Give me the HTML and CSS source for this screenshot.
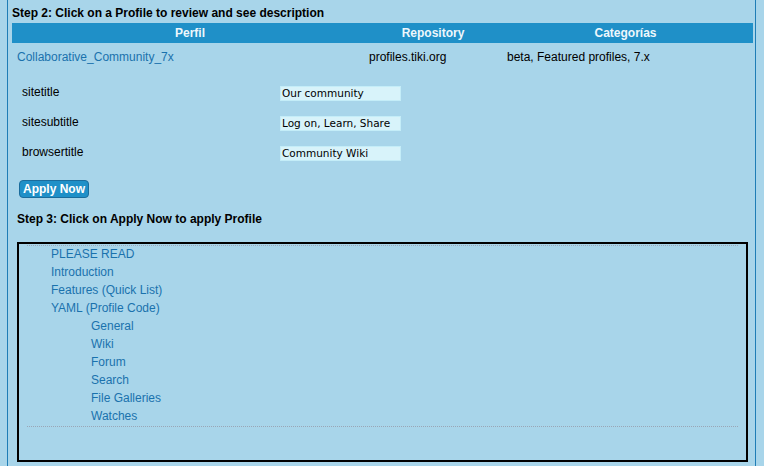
FILE: index.html
```html
<!DOCTYPE html>
<html>
<head>
<meta charset="utf-8">
<link rel="stylesheet" href="styles.css">
</head>
<body>
<div class="panel">
  <h3 class="step">Step 2: Click on a Profile to review and see description</h3>
  <div class="table">
    <div class="thead">
      <div class="th c1">Perfil</div>
      <div class="th c2">Repository</div>
      <div class="th c3">Categorías</div>
    </div>
    <div class="trow">
      <div class="td c1"><a href="#" class="link">Collaborative_Community_7x</a></div>
      <div class="td c2">profiles.tiki.org</div>
      <div class="td c3">beta, Featured profiles, 7.x</div>
    </div>
  </div>
  <div class="form">
    <div class="frow"><span class="label">sitetitle</span><span class="input">Our community</span></div>
    <div class="frow"><span class="label">sitesubtitle</span><span class="input">Log on, Learn, Share</span></div>
    <div class="frow"><span class="label">browsertitle</span><span class="input">Community Wiki</span></div>
  </div>
  <button class="btn">Apply Now</button>
  <h3 class="step step3">Step 3: Click on Apply Now to apply Profile</h3>
  <div class="box">
    <ul class="toc">
      <li><a href="#" class="link">PLEASE READ</a></li>
      <li><a href="#" class="link">Introduction</a></li>
      <li><a href="#" class="link">Features (Quick List)</a></li>
      <li><a href="#" class="link">YAML (Profile Code)</a></li>
      <li class="sub"><a href="#" class="link">General</a></li>
      <li class="sub"><a href="#" class="link">Wiki</a></li>
      <li class="sub"><a href="#" class="link">Forum</a></li>
      <li class="sub"><a href="#" class="link">Search</a></li>
      <li class="sub"><a href="#" class="link">File Galleries</a></li>
      <li class="sub"><a href="#" class="link">Watches</a></li>
    </ul>
  </div>
</div>
</body>
</html>
```
FILE: styles.css
```css
html, body {
  margin: 0;
  padding: 0;
  background: #a8d5ea;
  height: 100%;
}
body {
  font-family: "Liberation Sans", Arial, sans-serif;
  font-size: 12px;
  color: #000;
  overflow: hidden;
}
.panel {
  margin-left: 7px;
  width: 741px;
  min-height: 466px;
  border-left: 1px solid #1f7db6;
  border-right: 1px solid #1f7db6;
  padding: 0 2px 0 4px;
  box-sizing: content-box;
}
.step {
  margin: 0;
  padding-top: 6px;
  height: 17px;
  font-size: 12px;
  line-height: 15px;
  font-weight: bold;
}
.thead {
  display: grid;
  grid-template-columns: 356px 130px 255px;
  background: #1f90c8;
  height: 20px;
  align-items: center;
}
.th {
  text-align: center;
  color: #eef7fc;
  font-weight: bold;
  font-size: 12px;
}
.trow {
  display: grid;
  grid-template-columns: 356px 138px 247px;
  height: 28px;
  align-items: center;
}
.td.c1 { padding-left: 5px; }
.td.c2 { padding-left: 1px; }
.td.c3 { padding-left: 1px; }
.link {
  color: #1a72ad;
  text-decoration: none;
}
.form {
  margin-top: 7px;
}
.frow {
  display: flex;
  align-items: center;
  height: 30px;
}
.label {
  width: 258px;
  padding-left: 10px;
  margin-top: -3px;
}
.input {
  box-sizing: border-box;
  width: 121px;
  height: 15px;
  background: #d8f3fa;
  border: 1px solid #c4edf8;
  font-family: "DejaVu Sans", Verdana, sans-serif;
  font-size: 10.5px;
  line-height: 12px;
  padding-left: 1px;
  color: #000;
  white-space: nowrap;
  overflow: hidden;
}
.btn {
  display: block;
  margin: 12px 0 0 7px;
  width: 70px;
  height: 18px;
  padding: 0;
  background: #1f90c8;
  border: 1px solid #1a6c9c;
  border-radius: 4px;
  color: #fff;
  font-family: "Liberation Sans", Arial, sans-serif;
  font-weight: bold;
  font-size: 12px;
  line-height: 16px;
}
.step3 {
  padding-top: 14px;
  padding-left: 5px;
  height: 16px;
  margin-bottom: 14px;
}
.box {
  margin-left: 5px;
  width: 727px;
  height: 216px;
  border: 2px solid #000;
}
.toc {
  list-style: none;
  margin: 1px 8px 0 8px;
  padding: 0;
  border-top: 1px dotted #9aa6b6;
  border-bottom: 1px dotted #9aa6b6;
}
.toc li {
  height: 18px;
  line-height: 16px;
  padding-left: 24px;
}
.toc li.sub {
  padding-left: 64px;
}
```
